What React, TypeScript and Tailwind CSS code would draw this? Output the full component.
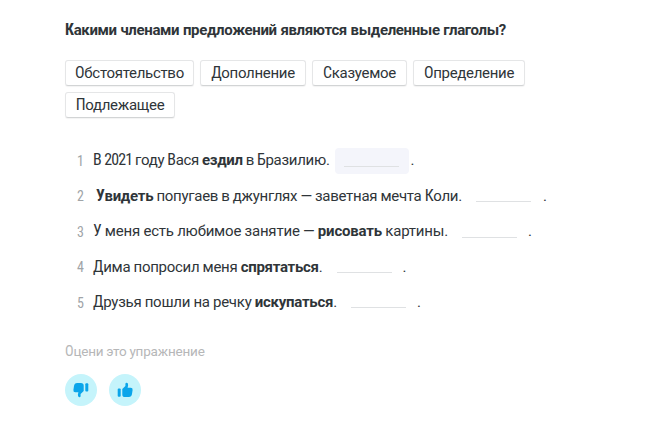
import type { ReactNode } from "react";

const answers = [
  { label: "Обстоятельство", className: "w-[129px]" },
  { label: "Дополнение", className: "w-[106px]" },
  { label: "Сказуемое", className: "w-[95px]" },
  { label: "Определение", className: "w-[112px]" },
  { label: "Подлежащее", className: "w-[110px]" },
];

function Blank({ active = false, className = "" }: { active?: boolean; className?: string }) {
  return (
    <span
      className={`flex h-[26px] w-[74px] shrink-0 justify-center rounded-[4px] ${active ? "bg-[#f4f5fb]" : ""} ${className}`}
    >
      <span className="mt-[18px] h-px w-[55px] bg-[#dfe1e3]" />
    </span>
  );
}

function Row({ number, children }: { number: number; children: ReactNode }) {
  return (
    <li className="flex h-[35.5px] items-center whitespace-pre">
      <span className="w-[28px] pl-[12px] pt-[2px] text-[14px] text-[#a0a4a7] [font-stretch:75%]">{number}</span>
      {children}
    </li>
  );
}

function Thumb({ down = false }: { down?: boolean }) {
  return (
    <button className="flex size-8 items-center justify-center rounded-full bg-[#c5f4fb]">
      <svg viewBox="0 0 16 16" className={`size-4 fill-[#0ba5ea] ${down ? "rotate-180" : ""}`}>
        <rect x="0.7" y="6.5" width="3" height="8.3" rx="1" />
        <path d="M5.3 7.1 8.4 4V1.8Q8.6.7 9.7.8q1.8.3 1.4 2.6l-.5 2.4h3.1q2.2 0 1.9 2.3l-.6 4q-.4 3-3.2 3H8.1q-2.8 0-2.8-2.6Z" />
      </svg>
    </button>
  );
}

// Capitals and digits are set narrower and a little taller than the lowercase.
function Cap({ children }: { children: string }) {
  return <span className="text-[1.06em] leading-none [font-stretch:75%]">{children}</span>;
}

export default function App() {
  return (
    <main className="h-[447px] w-[667px] bg-white pl-[65px] pt-[18px] font-['Roboto','Noto_Sans',sans-serif] text-[15px] tracking-[-0.19px] text-[#2f3539] [word-spacing:-0.2px]">
      <h1 className="h-6 whitespace-nowrap font-bold leading-6 tracking-[-0.35px] [word-spacing:0.3px]">
        <Cap>К</Cap>акими членами предложений являются выделенные глаголы?
      </h1>
      <div className="mt-[18px] flex w-[480px] flex-wrap gap-[6px]">
        {answers.map(({ label, className }) => (
          <button
            key={label}
            className={`h-[26px] whitespace-nowrap rounded-[3px] border border-[#e5e6e7] border-b-[#d2d4d5] text-center leading-6 tracking-[-0.3px] shadow-[0_1px_1px_#0000000d] ${className}`}
          >
            <Cap>{label[0]}</Cap>{label.slice(1)}
          </button>
        ))}
      </div>
      <ol className="mt-[24.5px]">
        <Row number={1}>
          <span className="tracking-[-0.28px] [word-spacing:-0.5px]"><Cap>В</Cap> <span className="tracking-[-0.9px]"><Cap>2021</Cap></span> году <Cap>В</Cap>ася <b>ездил</b> в <Cap>Б</Cap>разилию.</span>
          <Blank active className="mt-[2px] ml-[5px]" />
          <span className="ml-[2px]">.</span>
        </Row>
        <Row number={2}>
          <span className="ml-[3px] tracking-[-0.29px]"><b><Cap>У</Cap>видеть</b> попугаев в джунглях — заветная мечта <Cap>К</Cap>оли.</span>
          <Blank className="mt-px ml-[5px]" />
          <span className="ml-[2px]">.</span>
        </Row>
        <Row number={3}>
          <span><Cap>У</Cap> меня есть любимое занятие — <b>рисовать</b> картины.</span>
          <Blank className="mt-px ml-[4px]" />
          <span className="ml-[2px]">.</span>
        </Row>
        <Row number={4}>
          <span className="tracking-[-0.28px]"><Cap>Д</Cap>има попросил меня <b>спрятаться</b>.</span>
          <Blank className="mt-px ml-[5px]" />
          <span className="ml-[1px]">.</span>
        </Row>
        <Row number={5}>
          <span className="tracking-[-0.25px]"><Cap>Д</Cap>рузья пошли на речку <b>искупаться</b>.</span>
          <Blank className="ml-[5px]" />
          <span className="ml-[1px]">.</span>
        </Row>
      </ol>
      <p className="mt-[20.5px] h-5 text-[13.5px] leading-5 text-[#b6b7b8]"><Cap>О</Cap>цени это упражнение</p>
      <div className="mt-[13px] flex gap-3">
        <Thumb down />
        <Thumb />
      </div>
    </main>
  );
}
